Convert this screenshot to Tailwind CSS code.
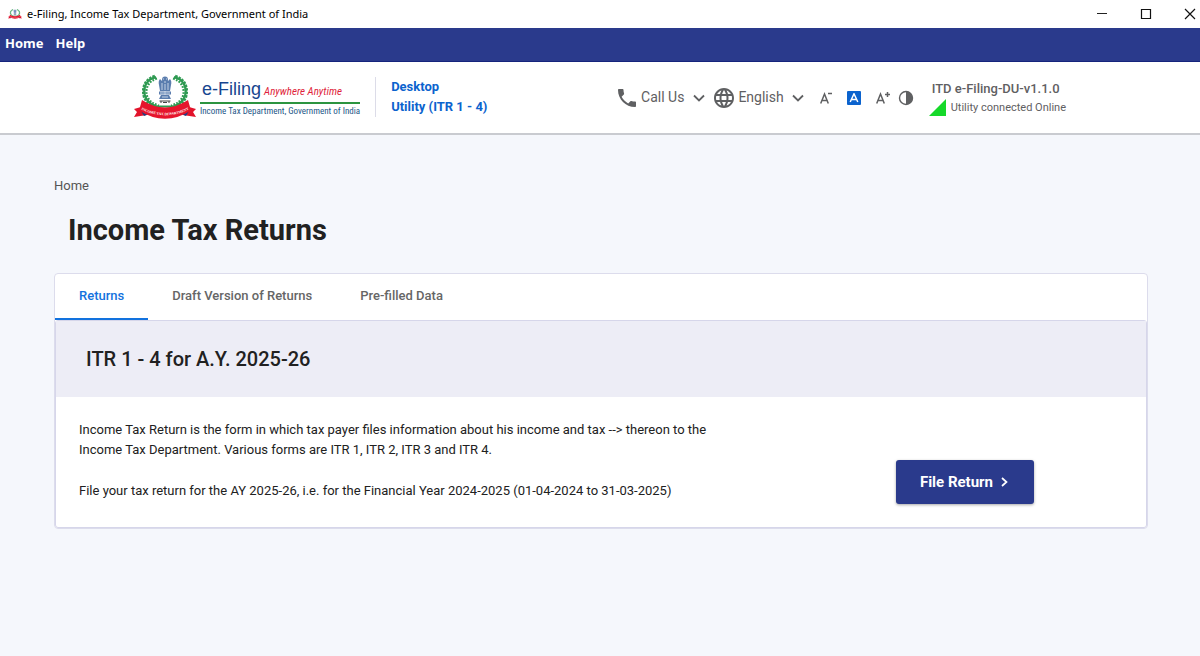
<!DOCTYPE html>
<html lang="en">
<head>
<meta charset="utf-8">
<meta name="viewport" content="width=device-width, initial-scale=1">
<title>e-Filing, Income Tax Department, Government of India</title>
<script src="https://cdn.jsdelivr.net/npm/@tailwindcss/browser@4"></script>
</head>
<body class="min-h-screen bg-[#f5f7fc] font-['Roboto',sans-serif] text-[#212121]">

<!-- Shared department emblem -->
<svg class="hidden" aria-hidden="true">
  <symbol id="emblem" viewBox="0 0 64 48">
    <g fill="none" stroke="#2f9a52">
      <path d="M23 4C13 6.500 9.500 15 12 23C14 29 19 32.500 26 34M41 4C51 6.500 54.500 15 52 23C50 29 45 32.500 38 34" stroke-width="2.200"/>
      <path d="M22 3.500C12 6.500 9 15 11.500 24C13.500 29 18 32.500 23 34M42 3.500C52 6.500 55 15 52.500 24C50.500 29 46 32.500 41 34" stroke-width="3.400" stroke-dasharray="2.400 1"/>
      <path d="M24 5.500C15 8 12 16 14 23C16 28 20 31 26 32.500M40 5.500C49 8 52 16 50 23C48 28 44 31 38 32.500" stroke-width="2.200" stroke-dasharray="1.800 1.300"/>
      <path d="M24 33.500H40" stroke-width="2"/>
    </g>
    <g fill="#5b7dae">
      <ellipse cx="32" cy="7" rx="3" ry="3.400"/>
      <path d="M27 6q-2 2-1 6l1 6h10l1-6q1-4-1-6l-2 2h-6z"/>
      <rect x="26" y="18.500" width="12" height="3"/>
      <path d="M28 22h8l2 4H26z"/>
    </g>
    <g fill="none" stroke="#dfe8f4" stroke-width=".8">
      <path d="M30 6h1M33 6h1M31 9h2M29 10v7M32 11v6M35 10v7M27 20h3M34 20h3"/>
      <circle cx="32" cy="20" r="1.200"/>
      <path d="M29 24h6"/>
    </g>
    <path d="M27 29h2M30 29.500h4M35 29h2M26.500 28h11" stroke="#444" stroke-width="1" fill="none"/>
    <path d="M8 34L1 36l3 3-3 5 13-2zM56 34l7 2-3 3 3 5-13-2z" fill="#e2132b"/>
    <path d="M8 38l3 5 5-2zM56 38l-3 5-5-2z" fill="#1d3f86"/>
    <path d="M9 27Q32 42 55 27L58 37.500Q32 54 6 37.500Z" fill="#e6152c"/>
    <path id="ribbonLine" d="M4 34.500Q32 50 60 34.500" fill="none"/>
    <text fill="#fff" font-family="Liberation Serif, serif" font-weight="700" font-size="3.600" text-anchor="middle"><textPath href="#ribbonLine" startOffset="50%">INCOME TAX DEPARTMENT</textPath></text>
  </symbol>
</svg>

<div class="flex h-7 items-center bg-white pl-2 font-['Noto_Sans',sans-serif] text-[11px] text-black">
  <svg class="h-3 w-[14px]" aria-hidden="true"><use href="#emblem"/></svg>
  <span class="ml-[5px]">e-Filing, Income Tax Department, Government of India</span>
  <div class="ml-auto flex gap-8 pr-1">
    <button type="button" aria-label="Minimize"><svg class="size-3" viewBox="0 0 12 12" fill="none" stroke="#222"><path d="M1 5.500h10"/></svg></button>
    <button type="button" aria-label="Maximize"><svg class="size-3" viewBox="0 0 12 12" fill="none" stroke="#111" stroke-width="1.200"><path d="M1.500 1.500h9v9h-9z"/></svg></button>
    <button type="button" aria-label="Close"><svg class="size-3" viewBox="0 0 12 12" fill="none" stroke="#111" stroke-width="1.200"><path d="M1 1l10 10M11 1L1 11"/></svg></button>
  </div>
</div>

<nav class="flex h-[34px] items-center gap-3 border-b border-[#15247c] bg-[#2a3a8c] px-[5px] pb-[2px] font-['Noto_Sans',sans-serif] text-[13px] font-bold text-white">
  <a href="#home">Home</a>
  <a href="#help">Help</a>
</nav>

<header class="flex h-[73px] items-center justify-between border-b-2 border-[#c9cbd0] bg-white pr-[134px] pl-[133px]">
  <div class="flex items-center pb-[2px]">
    <a href="#home" class="flex items-center" aria-label="e-Filing home">
      <svg class="h-12 w-16" aria-hidden="true"><use href="#emblem"/></svg>
      <span class="ml-[3px] flex flex-col whitespace-nowrap">
        <span class="flex items-baseline gap-[3px] border-b-2 border-[#2c9440] pt-1 pl-[2px] leading-[21px]">
          <span class="font-['Liberation_Sans',sans-serif] text-[18px] text-[#17458f]">e-Filing</span>
          <span class="font-['Roboto_Condensed','Liberation_Sans',sans-serif] text-[11px] text-[#e01f3d] italic">Anywhere Anytime</span>
        </span>
        <span class="font-['Roboto_Condensed','Liberation_Sans',sans-serif] text-[9px] leading-[14px] text-[#1d5788]">Income Tax Department, Government of India</span>
      </span>
    </a>
    <div class="ml-[15px] border-l border-[#dcdce8] pl-[15px] text-[13px] leading-5 font-bold text-[#0b63ce]">Desktop<br>Utility (ITR 1 - 4)</div>
  </div>

  <div class="flex items-center text-[#5f6062]">
    <button type="button" class="flex items-center text-[14px]">
      <svg class="size-6" viewBox="0 0 24 24" fill="currentColor" aria-hidden="true"><path d="M6.620 10.790c1.440 2.830 3.760 5.140 6.590 6.590l2.200-2.200c.27-.27.67-.36 1.020-.24 1.120.37 2.330.57 3.570.57.55 0 1 .45 1 1V20c0 .55-.45 1-1 1-9.390 0-17-7.610-17-17 0-.55.45-1 1-1h3.500c.55 0 1 .45 1 1 0 1.250.2 2.450.57 3.570.11.35.03.74-.25 1.020l-2.200 2.200z"/></svg>
      <span class="ml-[2px]">Call Us</span>
      <svg class="ml-[9px] h-2 w-3" viewBox="0 0 12 8" fill="none" stroke="currentColor" stroke-width="1.800" aria-hidden="true"><path d="M1 1.500l5 5 5-5"/></svg>
    </button>
    <button type="button" class="ml-[7px] flex items-center text-[14px]">
      <svg class="size-6" viewBox="0 0 24 24" fill="currentColor" aria-hidden="true"><path d="M11.990 2C6.470 2 2 6.480 2 12s4.470 10 9.990 10C17.520 22 22 17.520 22 12S17.520 2 11.990 2zm6.930 6h-2.950c-.32-1.250-.78-2.450-1.380-3.560 1.840.63 3.370 1.910 4.330 3.560zM12 4.040c.83 1.200 1.480 2.530 1.910 3.960h-3.820c.43-1.430 1.080-2.760 1.910-3.960zM4.260 14C4.100 13.360 4 12.690 4 12s.1-1.360.26-2h3.380c-.08.66-.14 1.320-.14 2s.06 1.340.14 2H4.260zm.82 2h2.950c.32 1.250.78 2.450 1.380 3.560-1.840-.63-3.370-1.900-4.330-3.560zm2.950-8H5.080c.96-1.660 2.490-2.930 4.330-3.560C8.810 5.550 8.350 6.750 8.030 8zM12 19.960c-.83-1.200-1.480-2.530-1.910-3.960h3.820c-.43 1.430-1.080 2.760-1.910 3.960zM14.340 14H9.660c-.09-.66-.16-1.320-.16-2s.07-1.350.16-2h4.680c.09.65.16 1.320.16 2s-.07 1.340-.16 2zm.25 5.560c.6-1.110 1.060-2.310 1.380-3.560h2.950c-.96 1.650-2.490 2.930-4.330 3.560zM16.360 14c.08-.66.14-1.320.14-2s-.06-1.340-.14-2h3.380c.16.64.26 1.310.26 2s-.1 1.360-.26 2h-3.380z"/></svg>
      <span class="ml-[2px]">English</span>
      <svg class="ml-[8px] h-2 w-3" viewBox="0 0 12 8" fill="none" stroke="currentColor" stroke-width="1.800" aria-hidden="true"><path d="M1 1.500l5 5 5-5"/></svg>
    </button>
    <button type="button" class="ml-4 w-3" aria-label="Decrease text size"><svg class="h-[14px] w-3" viewBox="0 0 12 14" fill="none" stroke="currentColor" stroke-width="1.500" aria-hidden="true"><path d="M.7 12.500L4.500 3l3.800 9.500M2 9.500h5M8 2.500h4"/></svg></button>
    <button type="button" class="ml-[15px] flex size-[14px] items-center justify-center rounded-[1px] bg-[#0b63ce]" aria-label="Normal text size"><svg class="size-[10px]" viewBox="0 0 10 10" fill="none" stroke="#fff" stroke-width="1.500" aria-hidden="true"><path d="M1.200 9L5 .8 8.800 9M2.500 6.500h5"/></svg></button>
    <button type="button" class="ml-[15px]" aria-label="Increase text size"><svg class="h-[14px] w-[14px]" viewBox="0 0 14 14" fill="none" stroke="currentColor" stroke-width="1.500" aria-hidden="true"><path d="M.7 12.500L4.500 3l3.800 9.500M2 9.500h5M9 3.500h5M11.500 1v5"/></svg></button>
    <button type="button" class="ml-2" aria-label="Toggle contrast"><svg class="size-4" viewBox="0 0 16 16" aria-hidden="true"><circle cx="8" cy="8" r="6.500" fill="none" stroke="currentColor" stroke-width="1.400"/><path d="M8 1.500a6.500 6.500 0 0 1 0 13z" fill="currentColor"/></svg></button>
    <div class="ml-[15px] flex flex-col pt-[2px]">
      <div class="pl-[3px] text-[13px] leading-[18px] font-medium">ITD e-Filing-DU-v1.1.0</div>
      <div class="flex items-center gap-[5px] text-[11px] leading-5">
        <svg class="h-[17px] w-[17px]" viewBox="0 0 17 17" aria-hidden="true"><path d="M17 0v17H0z" fill="#16d92a"/></svg>
        Utility connected Online
      </div>
    </div>
  </div>
</header>

<main class="pt-[41px] pr-[52px] pl-[54px]">
  <nav aria-label="Breadcrumb" class="text-[13px] leading-5 text-[#555]"><a href="#home">Home</a></nav>
  <h1 class="mt-[14px] pl-[14px] text-[29px] leading-10 font-bold">Income Tax Returns</h1>

  <section class="mt-[23px] rounded-[4px] border border-[#dcdcec] bg-white">
    <div role="tablist" class="flex h-[46px] text-[13px] font-medium text-[#666]">
      <button type="button" role="tab" aria-selected="true" class="border-b-2 border-[#1272de] px-6 text-[#1272de]">Returns</button>
      <button type="button" role="tab" aria-selected="false" class="border-b-2 border-transparent px-6">Draft Version of Returns</button>
      <button type="button" role="tab" aria-selected="false" class="border-b-2 border-transparent px-6">Pre-filled Data</button>
    </div>
    <div role="tabpanel" class="rounded-[3px] border border-[#d6d6ea]">
      <h2 class="bg-[#ededf6] px-[30px] py-6 text-[20px] leading-7 font-medium">ITR 1 - 4 for A.Y. 2025-26</h2>
      <div class="flex items-end justify-between pt-[23px] pr-[112px] pb-[23px] pl-[23px]">
        <div class="max-w-[655px] text-[13px] leading-5">
          <p>Income Tax Return is the form in which tax payer files information about his income and tax --&gt; thereon to the Income Tax Department. Various forms are ITR 1, ITR 2, ITR 3 and ITR 4.</p>
          <p class="mt-[21px] pb-[3px]">File your tax return for the AY 2025-26, i.e. for the Financial Year 2024-2025 (01-04-2024 to 31-03-2025)</p>
        </div>
        <button type="button" class="flex h-11 items-center gap-2 rounded-[3px] bg-[#2a3a8c] pr-[26px] pl-6 text-[15px] font-bold text-white shadow-[0_1px_3px_rgba(0,0,0,0.35)]">
          File Return
          <svg class="h-[10px] w-[7px]" viewBox="0 0 7 10" fill="none" stroke="#fff" stroke-width="1.700" aria-hidden="true"><path d="M1 1l4.500 4L1 9"/></svg>
        </button>
      </div>
    </div>
  </section>
</main>
</body>
</html>
